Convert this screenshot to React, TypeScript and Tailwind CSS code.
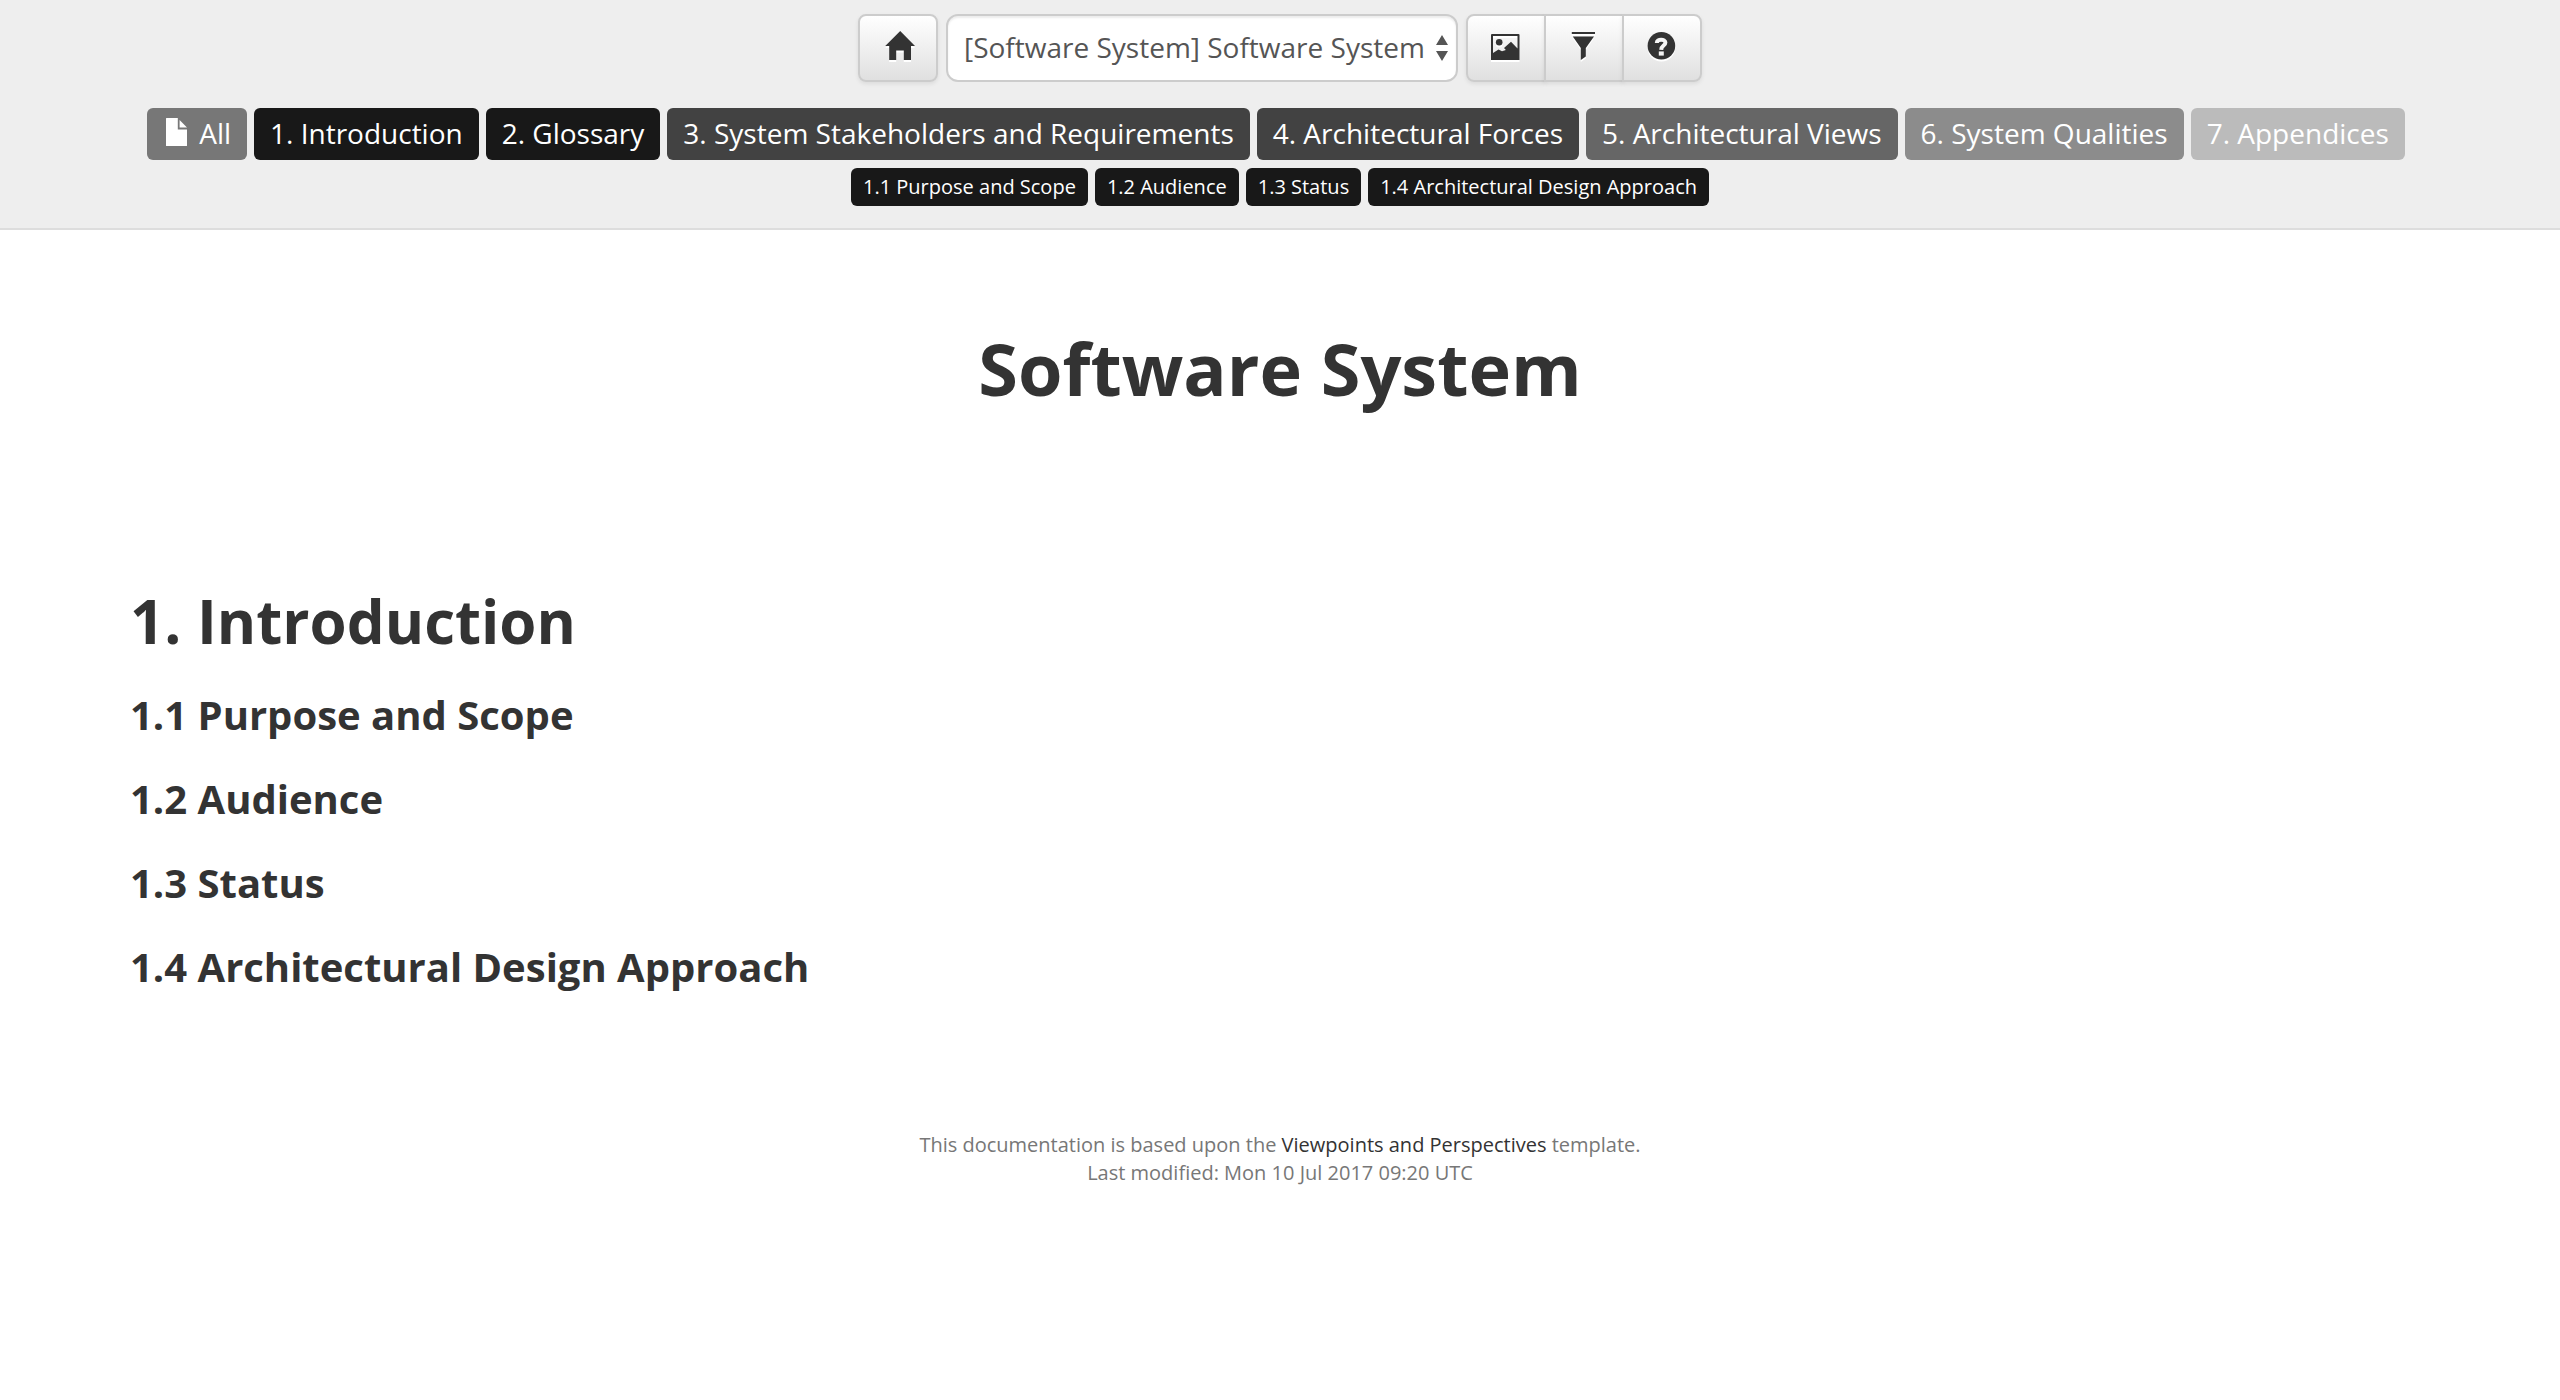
import React from "react";

const sections = [
  { label: "1. Introduction", tone: "bg-[#181818]" },
  { label: "2. Glossary", tone: "bg-[#181818]" },
  { label: "3. System Stakeholders and Requirements", tone: "bg-[#424242]" },
  { label: "4. Architectural Forces", tone: "bg-[#424242]" },
  { label: "5. Architectural Views", tone: "bg-[#666666]" },
  { label: "6. System Qualities", tone: "bg-[#8c8c8c]" },
  { label: "7. Appendices", tone: "bg-[#bbbbbb]" },
];

const topics = ["1.1 Purpose and Scope", "1.2 Audience", "1.3 Status", "1.4 Architectural Design Approach"];

const iconClass = "size-8 fill-[#333333] drop-shadow-[0_2px_0_#ffffff]";
const buttonClass =
  "flex h-[68px] w-20 cursor-pointer items-center justify-center border-2 border-[#cccccc] bg-linear-to-b from-white to-[#e0e0e0] pb-1 shadow-[0_2px_4px_rgba(0,0,0,0.08)]";

function HomeIcon() {
  return (
    <svg viewBox="0 0 32 32" className={iconClass} aria-hidden="true">
      <path d="M16.2 1 L31 16 H27 V30 H19.8 V20.5 H12.2 V30 H5.2 V16 H1.2 Z" />
    </svg>
  );
}

function PictureIcon() {
  return (
    <svg viewBox="0 0 32 32" className={iconClass} aria-hidden="true">
      <path
        fillRule="evenodd"
        d="M2 4 H28.5 Q29.5 4 29.5 5 V30 H1 V5 Q1 4 2 4 Z M3 6 V23 L8.5 19.5 L12 21.3 L15.8 20 L14 18 L21 11.8 L27.5 18.5 V6 Z"
      />
      <circle cx="9.2" cy="12.3" r="3.3" />
    </svg>
  );
}

function FilterIcon() {
  return (
    <svg viewBox="0 0 32 32" className={iconClass} aria-hidden="true">
      <path d="M3.8 2 H27 V4 H3.8 Z M4.8 6.5 H26 L17.8 18 V26.5 L12.8 30 V18 Z" />
    </svg>
  );
}

function HelpIcon() {
  return (
    <svg viewBox="0 0 32 32" className={iconClass} aria-hidden="true">
      <circle cx="15.4" cy="15.8" r="13.8" />
      <path d="M10.8 13 C10.8 8.6 19.4 8.6 19.4 12.6 C19.4 15.8 15.4 15.4 15.2 19.8" fill="none" stroke="#f5f5f5" strokeWidth="4" />
      <path d="M12.8 21.4 H17.8 V25.6 H12.8 Z" fill="#f5f5f5" />
    </svg>
  );
}

export default function App() {
  return (
    <div className="min-h-screen bg-white font-['Open_Sans',sans-serif] text-[28px] leading-10 text-[#333333]">
      <header className="border-b-2 border-[#dddddd] bg-[#eeeeee] pt-3.5 pb-[22px]">
        <div className="flex justify-center gap-2">
          <button type="button" aria-label="Home" className={`${buttonClass} rounded-lg pl-1`}>
            <HomeIcon />
          </button>
          <div className="relative">
            <select
              aria-label="Software system"
              className="h-[68px] w-[512px] appearance-none rounded-xl border-2 border-[#cccccc] bg-white pb-0.5 pl-4 text-[28px] text-[#555555] shadow-[inset_0_2px_2px_rgba(0,0,0,0.075)]"
            >
              <option>[Software System] Software System</option>
            </select>
            <svg viewBox="0 0 14 26" className="pointer-events-none absolute top-[21px] right-[9px] h-[26px] w-3.5 fill-[#555555]" aria-hidden="true">
              <path d="M7 0 L13 10 H1 Z M1 16 H13 L7 26 Z" />
            </svg>
          </div>
          <div className="flex">
            <button type="button" aria-label="Diagrams" className={`${buttonClass} rounded-l-lg`}>
              <PictureIcon />
            </button>
            <button type="button" aria-label="Filter" className={`${buttonClass} -ml-0.5`}>
              <FilterIcon />
            </button>
            <button type="button" aria-label="Help" className={`${buttonClass} -ml-0.5 rounded-r-lg`}>
              <HelpIcon />
            </button>
          </div>
        </div>
        <nav aria-label="Sections" className="mt-[26px] flex flex-wrap justify-center gap-x-[7px] gap-y-2 pr-2 leading-[50px] text-white">
          <a href="#all" className="flex items-center gap-2 rounded-md bg-[#777777] px-4 pb-0.5">
            <svg viewBox="0 0 28 32" className="h-8 w-7 fill-white" aria-hidden="true">
              <path d="M3.5 1 H14.8 V12.4 H24 V28.5 Q24 29 23.5 29 H3.5 Q3 29 3 28.5 V1.5 Q3 1 3.5 1 Z M16.6 3 L24 10.4 H16.6 Z" />
            </svg>
            All
          </a>
          {sections.map((section) => (
            <a key={section.label} href="#section" className={`rounded-md px-4 pb-0.5 ${section.tone}`}>
              {section.label}
            </a>
          ))}
        </nav>
        <nav aria-label="Topics" className="mt-2 flex flex-wrap justify-center gap-x-[7px] gap-y-2 text-[20px] leading-[38px] text-white">
          {topics.map((topic) => (
            <a key={topic} href="#topic" className="rounded-md bg-[#181818] px-3">
              {topic}
            </a>
          ))}
        </nav>
      </header>
      <main className="px-[130px]">
        <h1 className="mt-[98px] text-center text-[72px] leading-20 font-bold">Software System</h1>
        <section className="mt-[181px]">
          <h2 className="text-[60px] leading-16 font-bold">1. Introduction</h2>
          {topics.map((topic) => (
            <h3 key={topic} className="mt-10 text-[40px] leading-11 font-bold">
              {topic}
            </h3>
          ))}
        </section>
      </main>
      <footer className="mt-[142px] text-center text-[20px] leading-7 text-[#777777]">
        <p>
          This documentation is based upon the <a href="#template" className="text-[#333333]">Viewpoints and Perspectives</a> template.
        </p>
        <p>Last modified: Mon 10 Jul 2017 09:20 UTC</p>
      </footer>
    </div>
  );
}
